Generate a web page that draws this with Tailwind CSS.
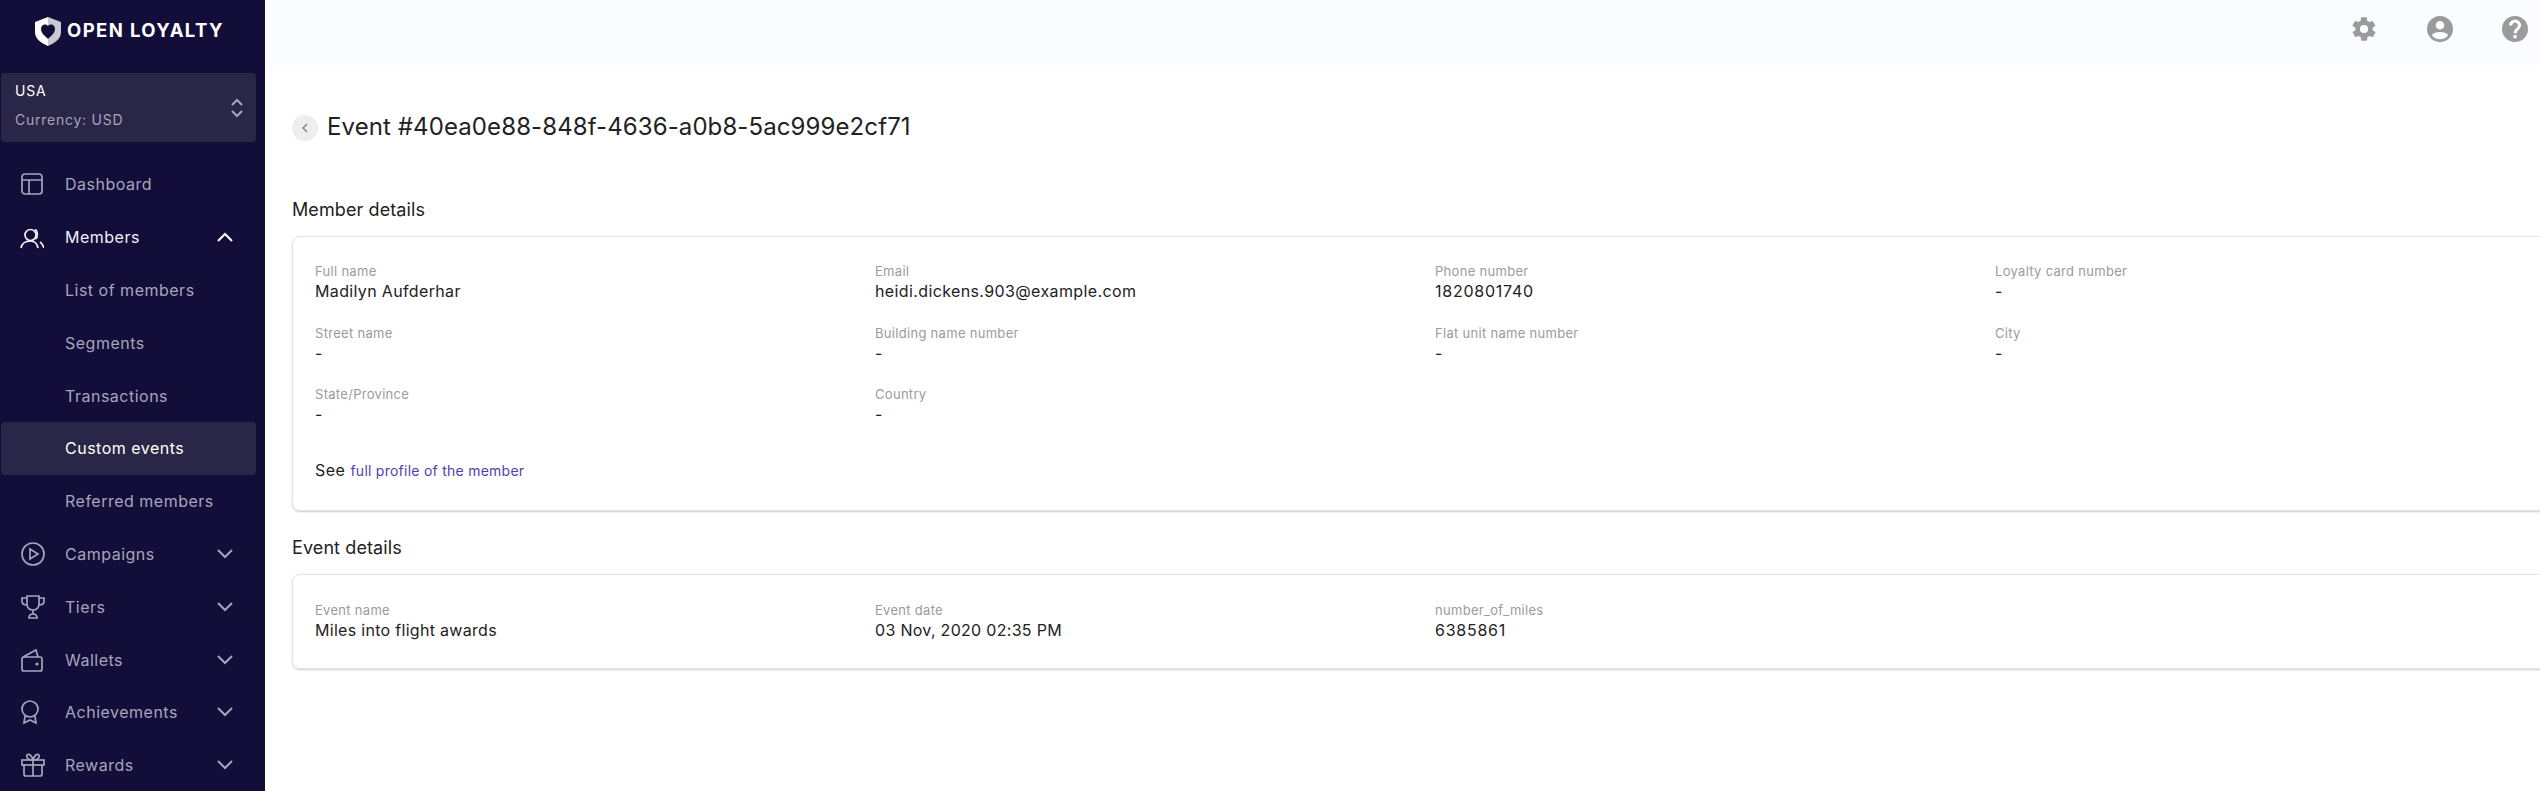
<!DOCTYPE html>
<html lang="en">
<head>
    <meta charset="UTF-8">
    <title>Open Loyalty - Event</title>
    <script src="https://cdn.jsdelivr.net/npm/@tailwindcss/browser@4"></script>
</head>
<body class="w-[2540px] h-[791px] overflow-hidden flex bg-white font-['Inter',sans-serif] text-[#222222]">
    <!-- sidebar -->
    <aside class="w-[265px] h-[791px] shrink-0 bg-[#130d3a] overflow-hidden">
        <div class="h-[73px] pl-[35px] pt-[16px] flex items-start gap-[6px]">
            <svg class="w-[26px] h-[29px] mt-[1px]" viewBox="0 0 26 29">
                <path d="M13 0 L0 5 V15 C0 22 6 26 13 29 Z M13 9 C10 6 6 8 6 12 C6 16 10 19 13 22 Z" fill="#ffffff" fill-rule="evenodd"/>
                <path d="M13 0 L26 5 V15 C26 22 20 26 13 29 V22 C16 19 20 16 20 12 C20 8 16 6 13 9 Z" fill="#c9c8d4"/>
            </svg>
            <span class="text-[18.5px] leading-[28px] font-bold text-white tracking-[1.4px] whitespace-nowrap">OPEN LOYALTY</span>
        </div>
        <div class="ml-px w-[255px] h-[69px] rounded-[4px] bg-[#2a2647] pl-[14px] pr-[12px] pb-[5px] flex items-center justify-between">
            <div class="text-[14px] leading-[29px] tracking-[0.75px]">
                <div class="text-white">USA</div>
                <div class="text-[#a7a5bb]">Currency: USD</div>
            </div>
            <svg class="w-[14px] h-[20px] mt-[5px]" viewBox="0 0 14 20" fill="none" stroke="#a7a5bb" stroke-width="2">
                <path d="M2 7 L7 2 L12 7 M2 13 L7 18 L12 13"/>
            </svg>
        </div>
        <nav class="mt-[15px] text-[16px] tracking-[0.5px] text-[#a7a5bb]">
            <div class="h-[53px] flex items-center">
                <svg class="w-[24px] h-[24px] ml-[20px] mr-[21px]" viewBox="0 0 24 24" fill="none" stroke="#a7a5bb" stroke-width="1.700"><rect x="2" y="2" width="20" height="20" rx="3"/><path d="M2 8 H22 M9 8 V22"/></svg>
                <span>Dashboard</span>
            </div>
            <div class="h-[53px] flex items-center text-[#f1f0f6]">
                <svg class="w-[24px] h-[24px] ml-[20px] mr-[21px]" viewBox="0 0 24 24" fill="none" stroke="#f1f0f6" stroke-width="1.700"><circle cx="10.500" cy="10" r="5.500"/><path d="M1 23 C2 18 6 16 10.500 16 C15 16 17 18 18 23 M15 4.500 C18 6 18 12 15.500 14 M20 17 C22 18 23 20 24 23"/></svg>
                <span class="flex-1">Members</span>
                <svg class="w-[16px] h-[10px] mr-[32px]" viewBox="0 0 16 10" fill="none" stroke="#ffffff" stroke-width="2"><path d="M1 9 L8 2 L15 9"/></svg>
            </div>
            <div class="h-[53px] flex items-center pl-[65px]">List of members</div>
            <div class="h-[53px] flex items-center pl-[65px]">Segments</div>
            <div class="h-[53px] flex items-center pl-[65px]">Transactions</div>
            <div class="ml-px w-[255px] h-[53px] rounded-[4px] bg-[#2a2647] flex items-center pl-[64px] pb-[2px] text-white">Custom events</div>
            <div class="h-[53px] flex items-center pl-[65px] pb-[2px]">Referred members</div>
            <div class="h-[53px] flex items-center pb-[1px]">
                <svg class="w-[24px] h-[24px] ml-[21px] mr-[20px]" viewBox="0 0 24 24" fill="none" stroke="#a7a5bb" stroke-width="1.700"><circle cx="12" cy="12" r="11"/><path d="M9 7 L17 12 L9 17 Z"/></svg>
                <span class="flex-1">Campaigns</span>
                <svg class="w-[16px] h-[10px] mr-[32px]" viewBox="0 0 16 10" fill="none" stroke="#a7a5bb" stroke-width="2"><path d="M1 1 L8 8 L15 1"/></svg>
            </div>
            <div class="h-[52px] flex items-center">
                <svg class="w-[24px] h-[24px] ml-[21px] mr-[20px]" viewBox="0 0 24 24" fill="none" stroke="#a7a5bb" stroke-width="1.700"><path d="M6 1 H18 V9 C18 13 15 15 12 15 C9 15 6 13 6 9 Z M6 3 H1 V6 C1 9 3 10 6 10 M18 3 H23 V6 C23 9 21 10 18 10 M12 15 V19 M8 23 C8 20 10 19 12 19 C14 19 16 20 16 23 Z"/></svg>
                <span class="flex-1">Tiers</span>
                <svg class="w-[16px] h-[10px] mr-[32px]" viewBox="0 0 16 10" fill="none" stroke="#a7a5bb" stroke-width="2"><path d="M1 1 L8 8 L15 1"/></svg>
            </div>
            <div class="h-[53px] flex items-center">
                <svg class="w-[24px] h-[24px] ml-[20px] mr-[21px]" viewBox="0 0 24 24" fill="none" stroke="#a7a5bb" stroke-width="1.700"><path d="M2 11 V21 C2 22 3 23 4 23 H20 C21 23 22 22 22 21 V11 C22 10 21 9 20 9 H4 C3 9 2 10 2 11 Z M3 9 L16 2 L18 9"/><circle cx="17" cy="16" r="0.7" fill="#a7a5bb"/></svg>
                <span class="flex-1">Wallets</span>
                <svg class="w-[16px] h-[10px] mr-[32px]" viewBox="0 0 16 10" fill="none" stroke="#a7a5bb" stroke-width="2"><path d="M1 1 L8 8 L15 1"/></svg>
            </div>
            <div class="h-[52px] flex items-center">
                <svg class="w-[24px] h-[24px] ml-[18px] mr-[23px]" viewBox="0 0 24 24" fill="none" stroke="#a7a5bb" stroke-width="1.700"><circle cx="12" cy="9" r="8"/><path d="M7 16 L6 23 L12 20 L18 23 L17 16"/></svg>
                <span class="flex-1">Achievements</span>
                <svg class="w-[16px] h-[10px] mr-[32px]" viewBox="0 0 16 10" fill="none" stroke="#a7a5bb" stroke-width="2"><path d="M1 1 L8 8 L15 1"/></svg>
            </div>
            <div class="h-[53px] flex items-center">
                <svg class="w-[24px] h-[24px] ml-[21px] mr-[20px]" viewBox="0 0 24 24" fill="none" stroke="#a7a5bb" stroke-width="1.700"><rect x="1" y="7" width="22" height="5"/><path d="M3 12 V21 C3 22 4 23 5 23 H19 C20 23 21 22 21 21 V12 M12 7 V23 M12 7 C8 7 5 5 6 2 C8 0 11 3 12 7 C13 3 16 0 18 2 C19 5 16 7 12 7"/></svg>
                <span class="flex-1">Rewards</span>
                <svg class="w-[16px] h-[10px] mr-[32px]" viewBox="0 0 16 10" fill="none" stroke="#a7a5bb" stroke-width="2"><path d="M1 1 L8 8 L15 1"/></svg>
            </div>
        </nav>
    </aside>

    <main class="w-[2275px] shrink-0 overflow-hidden">
        <header class="h-[65px] bg-[#fbfcff] flex items-center justify-end gap-[49px] pr-[12px] pb-[7px]">
            <svg class="w-[28px] h-[28px]" viewBox="0 0 24 24" fill="#9b9b9b"><path fill-rule="evenodd" d="M19.4 13a7.5 7.5 0 0 0 0-2l2.1-1.6a.5.5 0 0 0 .1-.7l-2-3.4a.5.5 0 0 0-.6-.2l-2.500 1a7.3 7.3 0 0 0-1.7-1l-.4-2.600a.5.5 0 0 0-.5-.5h-4a.5.5 0 0 0-.5.5l-.4 2.600a7.3 7.3 0 0 0-1.7 1l-2.500-1a.5.5 0 0 0-.6.2l-2 3.4a.5.5 0 0 0 .1.7L4.600 11a7.500 7.500 0 0 0 0 2l-2.100 1.600a.5.5 0 0 0-.1.7l2 3.400a.5.5 0 0 0 .6.2l2.500-1a7.300 7.300 0 0 0 1.700 1l.4 2.600a.5.5 0 0 0 .5.5h4a.5.5 0 0 0 .5-.5l.4-2.600a7.300 7.300 0 0 0 1.700-1l2.500 1a.5.5 0 0 0 .6-.2l2-3.400a.5.5 0 0 0-.1-.7ZM12 15.500a3.500 3.500 0 1 1 0-7 3.500 3.500 0 0 1 0 7Z"/></svg>
            <svg class="w-[26px] h-[26px]" viewBox="0 0 24 24" fill="#9b9b9b"><path fill-rule="evenodd" d="M12 0a12 12 0 1 0 0 24 12 12 0 0 0 0-24Zm0 4.500a4 4 0 1 1 0 8 4 4 0 0 1 0-8Zm0 17a9.500 9.500 0 0 1-7.600-3.800C5.500 15.700 9 14.800 12 14.800s6.500.9 7.600 2.900A9.500 9.500 0 0 1 12 21.500Z"/></svg>
            <svg class="w-[26px] h-[26px]" viewBox="0 0 24 24" fill="#9b9b9b"><path fill-rule="evenodd" d="M12 0a12 12 0 1 0 0 24 12 12 0 0 0 0-24Zm1.500 20.500h-3v-3h3v3Zm2.900-8.700c-.9.9-1.700 1.500-2.100 2.200-.4.600-.4 1.200-.4 2h-3c0-1.300.1-2.200.7-3.100.5-.8 1.400-1.500 2.200-2.300.5-.5.800-1.100.8-1.800a2.600 2.600 0 0 0-5.200 0h-3a5.600 5.600 0 0 1 11.200 0c0 1.200-.9 2.200-1.200 3Z"/></svg>
        </header>

        <div class="pl-[27px]">
            <div class="flex items-center mt-[44px] h-[36px]">
                <div class="w-[26px] h-[26px] rounded-full bg-[#eeeeee] flex items-center justify-center mr-[9px] mt-[2px]">
                    <svg class="w-[8px] h-[10px]" viewBox="0 0 8 10" fill="none" stroke="#777777" stroke-width="1.200"><path d="M6 1 L2 5 L6 9"/></svg>
                </div>
                <h1 class="text-[24px] tracking-[0.1px] leading-[36px] whitespace-nowrap font-normal">Event #40ea0e88-848f-4636-a0b8-5ac999e2cf71</h1>
            </div>

            <h2 class="mt-[53px] text-[18px] tracking-[0.1px] leading-[24px]">Member details</h2>
            <section class="mt-[14px] w-[2284px] h-[275px] rounded-[8px] border border-[#e4e4e4] shadow-[0_1px_2px_rgba(0,0,0,0.2)] px-[22px] pt-[26px]">
                <div class="grid grid-cols-4 gap-y-[21.500px] w-[2240px]">
                    <div class="h-[40px]"><div class="text-[13px] tracking-[0.3px] leading-[17px] text-[#9b9b9b]">Full name</div><div class="text-[16px] tracking-[0.35px] leading-[22px]">Madilyn Aufderhar</div></div>
                    <div class="h-[40px]"><div class="text-[13px] tracking-[0.3px] leading-[17px] text-[#9b9b9b]">Email</div><div class="text-[16px] tracking-[0.38px] leading-[22px]">heidi.dickens.903@example.com</div></div>
                    <div class="h-[40px]"><div class="text-[13px] tracking-[0.3px] leading-[17px] text-[#9b9b9b]">Phone number</div><div class="text-[16px] tracking-[0.75px] leading-[22px]">1820801740</div></div>
                    <div class="h-[40px]"><div class="text-[13px] tracking-[0.3px] leading-[17px] text-[#9b9b9b]">Loyalty card number</div><div class="text-[16px] tracking-[0.3px] leading-[22px]">-</div></div>
                    <div class="h-[40px]"><div class="text-[13px] tracking-[0.3px] leading-[17px] text-[#9b9b9b]">Street name</div><div class="text-[16px] tracking-[0.3px] leading-[22px]">-</div></div>
                    <div class="h-[40px]"><div class="text-[13px] tracking-[0.3px] leading-[17px] text-[#9b9b9b]">Building name number</div><div class="text-[16px] tracking-[0.3px] leading-[22px]">-</div></div>
                    <div class="h-[40px]"><div class="text-[13px] tracking-[0.3px] leading-[17px] text-[#9b9b9b]">Flat unit name number</div><div class="text-[16px] tracking-[0.3px] leading-[22px]">-</div></div>
                    <div class="h-[40px]"><div class="text-[13px] tracking-[0.3px] leading-[17px] text-[#9b9b9b]">City</div><div class="text-[16px] tracking-[0.3px] leading-[22px]">-</div></div>
                    <div class="h-[40px]"><div class="text-[13px] tracking-[0.3px] leading-[17px] text-[#9b9b9b]">State/Province</div><div class="text-[16px] tracking-[0.3px] leading-[22px]">-</div></div>
                    <div class="h-[40px]"><div class="text-[13px] tracking-[0.3px] leading-[17px] text-[#9b9b9b]">Country</div><div class="text-[16px] tracking-[0.3px] leading-[22px]">-</div></div>
                </div>
                <p class="mt-[31.500px] text-[16px] tracking-[0.5px] leading-[24px]">See <a class="text-[14px] tracking-[0.25px] text-[#4f3fb5]">full profile of the member</a></p>
            </section>

            <h2 class="mt-[25px] text-[18px] tracking-[0.1px] leading-[24px]">Event details</h2>
            <section class="mt-[14px] w-[2284px] h-[95px] rounded-[8px] border border-[#e4e4e4] shadow-[0_1px_2px_rgba(0,0,0,0.2)] px-[22px] pt-[27px]">
                <div class="grid grid-cols-4 w-[2240px]">
                    <div><div class="text-[13px] tracking-[0.3px] leading-[17px] text-[#9b9b9b]">Event name</div><div class="text-[16px] tracking-[0.3px] leading-[22px]">Miles into flight awards</div></div>
                    <div><div class="text-[13px] tracking-[0.3px] leading-[17px] text-[#9b9b9b]">Event date</div><div class="text-[16px] tracking-[0.3px] leading-[22px]">03 Nov, 2020 02:35 PM</div></div>
                    <div><div class="text-[13px] tracking-[0.3px] leading-[17px] text-[#9b9b9b]">number_of_miles</div><div class="text-[16px] tracking-[0.75px] leading-[22px]">6385861</div></div>
                </div>
            </section>
        </div>
    </main>
</body>
</html>
